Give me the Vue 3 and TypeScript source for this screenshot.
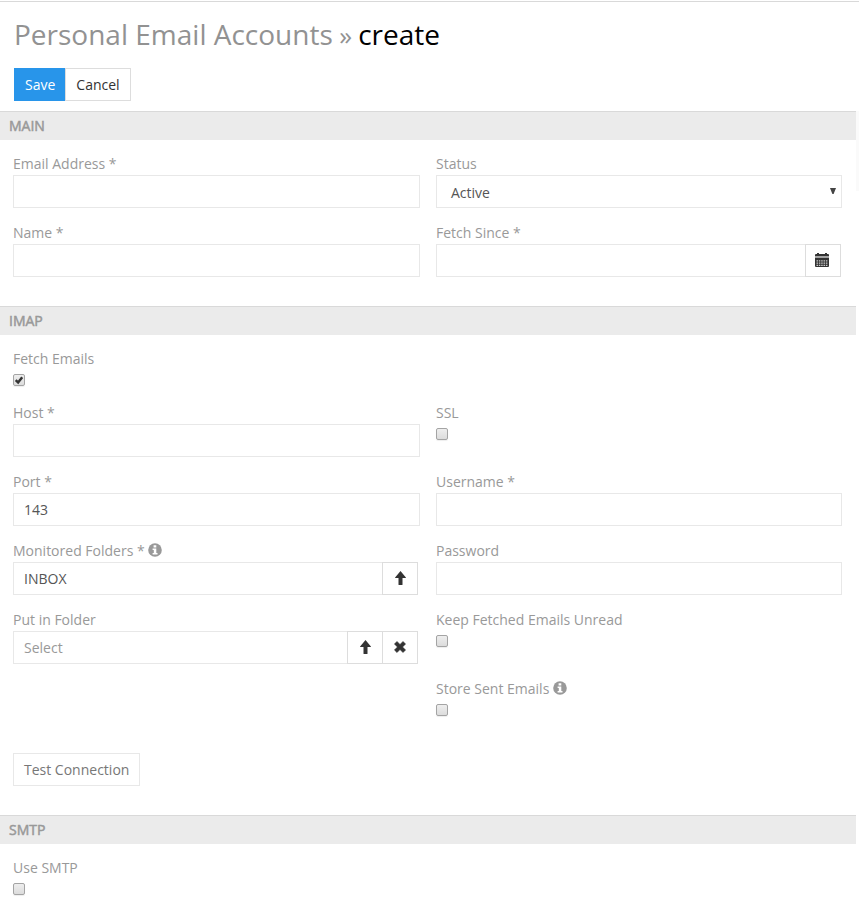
<script setup lang="ts">
import { reactive } from 'vue'

type FieldType = 'text' | 'select' | 'date' | 'check' | 'link' | 'linkClear' | 'empty'

interface Field {
  label: string
  type: FieldType
  value?: string
  placeholder?: string
  checked?: boolean
  info?: boolean
}

interface Panel {
  title: string
  fields: Field[]
  action?: string
}

const panels = reactive<Panel[]>([
  {
    title: 'MAIN',
    fields: [
      { label: 'Email Address *', type: 'text' },
      { label: 'Status', type: 'select', value: 'Active' },
      { label: 'Name *', type: 'text' },
      { label: 'Fetch Since *', type: 'date' },
    ],
  },
  {
    title: 'IMAP',
    action: 'Test Connection',
    fields: [
      { label: 'Fetch Emails', type: 'check', checked: true },
      { label: '', type: 'empty' },
      { label: 'Host *', type: 'text' },
      { label: 'SSL', type: 'check' },
      { label: 'Port *', type: 'text', value: '143' },
      { label: 'Username *', type: 'text' },
      { label: 'Monitored Folders *', type: 'link', value: 'INBOX', info: true },
      { label: 'Password', type: 'text' },
      { label: 'Put in Folder', type: 'linkClear', placeholder: 'Select' },
      { label: 'Keep Fetched Emails Unread', type: 'check' },
      { label: '', type: 'empty' },
      { label: 'Store Sent Emails', type: 'check', info: true },
    ],
  },
  {
    title: 'SMTP',
    fields: [{ label: 'Use SMTP', type: 'check' }],
  },
])
</script>

<template>
  <div class="page">
    <header class="header">
      <h3 class="title">
        <span class="scope">Personal Email Accounts</span><span class="sep">»</span><span>create</span>
      </h3>
      <div class="buttons">
        <button class="btn primary">Save</button><button class="btn cancel">Cancel</button>
      </div>
    </header>
    <div class="content">
      <main class="panels">
        <section v-for="panel in panels" :key="panel.title">
          <h4 class="heading">{{ panel.title }}</h4>
          <div class="body">
            <div class="grid">
              <div v-for="(field, i) in panel.fields" :key="i" class="cell">
                <template v-if="field.type !== 'empty'">
                  <label class="label">
                    <span>{{ field.label }}</span>
                    <svg v-if="field.info" class="info" viewBox="0 0 14 14">
                      <circle cx="7" cy="7" r="6.8" fill="#999" />
                      <path d="M5.6 2.3h2.7v2.1H5.6zM4.6 5.4h3.7v4.5h1.2v1.5H4.6V9.9h1.2V6.9H4.6z" fill="#fff" />
                    </svg>
                  </label>
                  <div v-if="field.type === 'check'" class="check-line">
                    <span class="check" role="checkbox" :aria-checked="!!field.checked" @click="field.checked = !field.checked">
                      <svg v-if="field.checked" viewBox="0 0 10 10">
                        <path d="M1.7 5.2L4.1 7.4L8.2 2.2" fill="none" stroke="#333" stroke-width="2.5" />
                      </svg>
                    </span>
                  </div>
                  <div v-else-if="field.type === 'select'" class="input select">
                    <span>{{ field.value }}</span>
                    <svg class="caret" viewBox="0 0 6 6"><path d="M0 0h6L3.6 6H2.4z" fill="#444" /></svg>
                  </div>
                  <input v-else-if="field.type === 'text'" v-model="field.value" class="input" type="text" />
                  <div v-else class="group" :class="field.type">
                    <input v-model="field.value" class="input" type="text" :placeholder="field.placeholder" />
                    <button v-if="field.type === 'date'" class="addon calendar">
                      <svg width="14" height="14" viewBox="0 0 14 14">
                        <path d="M0 3.6V2Q0 1 1 1h1V0h2v1h6V0h2v1h1q1 0 1 1v1.6z" fill="#333" />
                        <path d="M0 3.6h14v1.2H0z" fill="#bbb" />
                        <path d="M0 4.8h14V13q0 1-1 1H1q-1 0-1-1z" fill="#333" />
                        <path d="M1.5 7.8h11M1.5 10.2h11M1.5 12.4h11" stroke="#ccc" stroke-width="1.3" stroke-dasharray="1.5 .85" />
                      </svg>
                    </button>
                    <button v-else class="addon">
                      <svg width="12" height="14" viewBox="0 0 12 14">
                        <path d="M6.5 .1L11.9 6.4Q12.1 7 11.5 7H8.5v6.4q0 .5-.5.5H5q-.5 0-.5-.5V7H1.5Q.9 7 1.1 6.4z" fill="#333" />
                      </svg>
                    </button>
                    <button v-if="field.type === 'linkClear'" class="addon last">
                      <svg width="12" height="12" viewBox="0 0 12 12">
                        <path d="M3 .4L6 3.4L9 .4L11.6 3L8.6 6L11.6 9L9 11.6L6 8.6L3 11.6L.4 9L3.4 6L.4 3z" fill="#333" stroke="#333" stroke-width=".5" stroke-linejoin="round" />
                      </svg>
                    </button>
                  </div>
                </template>
              </div>
            </div>
            <button v-if="panel.action" class="btn action">{{ panel.action }}</button>
          </div>
        </section>
      </main>
      <aside class="rail"></aside>
    </div>
  </div>
</template>

<style>
body {
  background: #fff;
}
</style>

<style scoped>
* {
  box-sizing: border-box;
}
.page {
  height: 917px;
  overflow: hidden;
  padding-top: 1px;
  font: 14px/20px 'Open Sans', sans-serif;
  color: #333;
}
.header {
  height: 110px;
  border-top: 1px solid #d9d9d9;
  padding: 13px 14px 0;
}
.title {
  margin: 0;
  height: 38px;
  font-size: 28px;
  line-height: 38px;
  font-weight: 400;
  color: #000;
  white-space: nowrap;
}
.scope,
.sep {
  color: #929292;
}
.sep {
  font-size: 26px;
  line-height: 1;
  margin: 0 6px 0 6.5px;
}
.buttons {
  display: flex;
  margin-top: 15px;
}
.btn {
  height: 33px;
  padding: 0 10px;
  border: 1px solid #ddd;
  background: #fff;
  color: #333;
  font: inherit;
  white-space: nowrap;
}
.primary {
  width: 51px;
  border-color: #2895ea;
  background: #2895ea;
  color: #fff;
}
.cancel {
  width: 66px;
}
.content {
  display: flex;
}
.panels {
  width: 856px;
}
.rail {
  width: 3px;
  height: 80px;
  background: #fafafa;
}
.heading {
  margin: 0;
  height: 29px;
  padding-left: 9px;
  border-top: 1px solid #d9d9d9;
  background: #ebebeb;
  color: #999;
  font-size: 14px;
  line-height: 28px;
  font-weight: 400;
  -webkit-text-stroke: 0.5px #999;
}
.body {
  padding: 14px 14px 29px 13px;
}
.grid {
  display: grid;
  grid-template-columns: 407px 406px;
  gap: 15px 16px;
}
.label {
  display: flex;
  align-items: center;
  gap: 3.6px;
  height: 21px;
  padding-bottom: 1px;
  color: #999;
}
.info {
  width: 14px;
  height: 14px;
  margin-bottom: 2px;
}
.input {
  display: block;
  width: 100%;
  height: 33px;
  padding: 0 10px;
  border: 1px solid #e8e8e8;
  border-radius: 0;
  outline: 0;
  background: #fff;
  color: #555;
  font: inherit;
}
.input::placeholder {
  color: #999;
  opacity: 1;
}
.select {
  display: flex;
  justify-content: space-between;
  align-items: center;
  padding: 2px 5px 0 14px;
}
.caret {
  width: 6px;
  height: 6px;
  margin-bottom: 4px;
}
.group {
  display: flex;
  width: 405px;
}
.group .input {
  flex: 1;
  border-right: 0;
}
.addon {
  display: flex;
  justify-content: center;
  align-items: center;
  width: 36px;
  height: 33px;
  padding: 0 0 1px;
  border: 1px solid #ddd;
  background: #fff;
}
.calendar {
  padding-right: 2px;
}
.last {
  margin-left: -1px;
}
.check-line {
  height: 18px;
  padding-top: 4px;
}
.check {
  display: block;
  width: 12px;
  height: 12px;
  border: 1px solid #a4a4a4;
  border-radius: 2px;
  background: linear-gradient(#eee, #dcdcdc);
  box-shadow: 0 1px 1px #eee;
}
.check svg {
  display: block;
  width: 10px;
  height: 10px;
}
.action {
  display: block;
  width: 127px;
  margin-top: 35px;
  border-color: #e8e8e8;
  color: #777;
}
</style>
